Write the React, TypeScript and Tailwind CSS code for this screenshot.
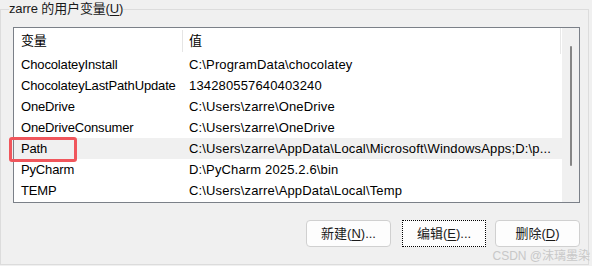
const vars = [
  { name: "ChocolateyInstall", value: "C:\\ProgramData\\chocolatey" },
  { name: "ChocolateyLastPathUpdate", value: "134280557640403240" },
  { name: "OneDrive", value: "C:\\Users\\zarre\\OneDrive" },
  { name: "OneDriveConsumer", value: "C:\\Users\\zarre\\OneDrive" },
  { name: "Path", value: "C:\\Users\\zarre\\AppData\\Local\\Microsoft\\WindowsApps;D:\\p..." },
  { name: "PyCharm", value: "D:\\PyCharm 2025.2.6\\bin" },
  { name: "TEMP", value: "C:\\Users\\zarre\\AppData\\Local\\Temp" },
];

const font = "font-['Liberation_Sans','Noto_Sans_CJK_SC',sans-serif]";

function DlgButton({ label, keyName, dots, focused }: { label: string; keyName: string; dots?: boolean; focused?: boolean }) {
  return (
    <button
      className={
        focused
          ? "w-[84px] h-[27px] bg-[#fdfdfd] border border-dotted border-black text-[13px] text-[#1a1a1a]"
          : "w-[85px] h-[27px] bg-[#fdfdfd] border border-[#d0d0d0] rounded-[4px] text-[13px] text-[#1a1a1a]"
      }
    >
      {label}(<span className="underline underline-offset-2">{keyName}</span>){dots ? "..." : ""}
    </button>
  );
}

export default function App() {
  return (
    <div className={`relative w-[592px] h-[266px] bg-[#f0f0f0] overflow-hidden text-black ${font}`}>
      <fieldset className="w-[589px] h-[265px] border border-[#dcdcdc] p-0">
        <legend className="ml-[8px] text-[13px] leading-[18px] tracking-[-0.15px] text-[#1a1a1a]">
          zarre 的用户变量(<span className="underline underline-offset-2">U</span>)
        </legend>

        <div className="ml-[12px] mt-[9px] w-[567px] h-[176px] border border-[#7b8088] bg-white flex">
          {/* list */}
          <div className="w-[548px] flex flex-col">
            <div className="h-[26px] flex items-center border-r border-[#e8e8e8] mr-[1px] text-[13px] tracking-[-0.15px]">
              <div className="w-[168px] pl-[7px] h-full flex items-center">变量</div>
              <div className="w-px h-[22px] bg-[#e5e5e5]"></div>
              <div className="pl-[6px]">值</div>
            </div>
            {vars.map((v) => (
              <div
                key={v.name}
                className={`h-[21px] flex items-center text-[13px] whitespace-nowrap ${
                  v.name === "Path" ? "bg-[#f0f0f0]" : ""
                }`}
              >
                <div className="w-[168px] pl-[7px] tracking-[-0.15px]">{v.name}</div>
                <div className="flex-1 pl-[7px] overflow-hidden tracking-[0.15px]">{v.value}</div>
              </div>
            ))}
          </div>
          {/* scrollbar */}
          <div className="w-[17px] bg-[#f0f0f0] flex justify-center pt-[18px]">
            <div className="w-[2px] h-[120px] bg-[#858585] rounded-full"></div>
          </div>
        </div>

        <div className="mt-[17px] w-[579px] flex justify-end">
          <DlgButton label="新建" keyName="N" dots />
          <div className="w-[11px]"></div>
          <DlgButton label="编辑" keyName="E" dots focused />
          <div className="w-[9px]"></div>
          <DlgButton label="删除" keyName="D" />
        </div>
      </fieldset>

      {/* highlight box around Path */}
      <div className="absolute left-[9px] top-[137px] w-[68px] h-[25px] border-[3px] border-[#f0565c] rounded-[3px]"></div>

      {/* watermark */}
      <div className="absolute right-[2px] bottom-[3px] text-[12px] leading-[14px] text-[#c8c8c8]">
        CSDN @沫璃墨染
      </div>
    </div>
  );
}
